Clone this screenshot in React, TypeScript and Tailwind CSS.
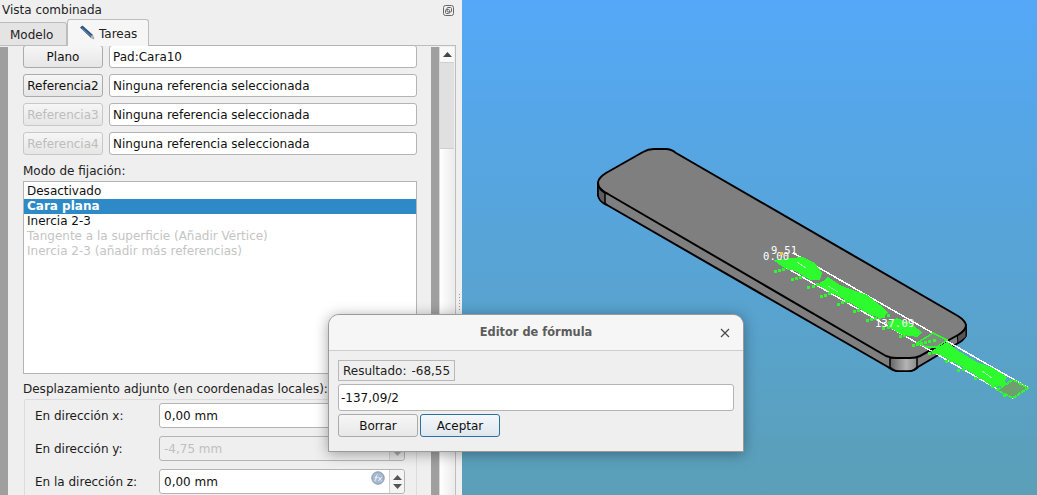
import React from 'react';

const FONT = "font-['DejaVu_Sans',sans-serif]";

const RefRow = ({ label, value, disabled }: { label: string; value: string; disabled?: boolean }) => (
  <div className="flex gap-[6px] h-[23px]">
    <div
      className={`w-[80px] h-full flex items-center justify-center rounded-[3px] border bg-gradient-to-b from-[#f6f6f6] to-[#e6e6e6] ${
        disabled ? 'border-[#c8c8c8] text-[#bdbdbd]' : 'border-[#ababab] text-[#111]'
      }`}
    >
      {label}
    </div>
    <div className="w-[308px] h-full flex items-center pl-[3px] bg-white border border-[#b4b4b4] rounded-[3px] text-[#111]">
      {value}
    </div>
  </div>
);

const SpinArrows = ({ disabled }: { disabled?: boolean }) => (
  <div className={`w-[15px] h-full flex flex-col items-center justify-center gap-[4px] border-l border-[#cfcfcf] rounded-r-[3px] ${disabled ? 'bg-[#e6e6e6]' : 'bg-[#f4f4f4]'}`}>
    <svg width="9" height="5" viewBox="0 0 9 5"><path d="M4.5 0 9 5H0z" fill={disabled ? '#a8a8a8' : '#555'} /></svg>
    <svg width="9" height="5" viewBox="0 0 9 5"><path d="M0 0h9L4.5 5z" fill={disabled ? '#a8a8a8' : '#555'} /></svg>
  </div>
);

const ExprIcon = () => (
  <svg width="14" height="14" viewBox="0 0 14 14" className="absolute right-[19px] top-[1px]">
    <circle cx="7" cy="7" r="6.2" fill="#a9bad0" stroke="#8094b0" />
    <path d="M3.5 10C5.5 10 4.5 4 6.5 3.8M3.8 6.4h3M7.4 6c1.4 1 1.6 3 3.2 4M10.8 6c-1.4 1-1.8 3-3.4 4" fill="none" stroke="#eef2f7" strokeWidth="1" />
  </svg>
);

const OffsetRow = ({ label, value, disabled }: { label: string; value: string; disabled?: boolean }) => (
  <div className="flex items-center h-[25px]">
    <div className="w-[124px] text-[#1a1a1a]">{label}</div>
    <div className={`relative w-[246px] h-full flex items-center border border-[#b4b4b4] rounded-[3px] ${disabled ? 'bg-[#efefef] text-[#c0c0c0]' : 'bg-white text-[#111]'}`}>
      <div className="flex-1 pl-[4px]">{value}</div>
      {!disabled && <ExprIcon />}
      <SpinArrows disabled={disabled} />
    </div>
  </div>
);

const Blob = ({ d }: { d: string }) => <path d={d} fill="#2dfb2d" />;

// rough specks so the imported sketch keeps its jagged edge
const specks = Array.from({ length: 90 }, (_, i) => {
  const t = i / 89;
  const across = ((i * 37) % 17) - 8;
  return { x: 778 + 240 * t + across * 0.5, y: 263 + 130 * t - across * 0.85 };
});

const PlateView = () => (
  <svg viewBox="462 0 575 495" className="w-full h-full block">
    <defs>
      <linearGradient id="cornerFill" x1="0" x2="1" y1="0" y2="0">
        <stop offset="0" stopColor="#666" />
        <stop offset="0.6" stopColor="#b4b4b4" />
        <stop offset="1" stopColor="#8a8a8a" />
      </linearGradient>
    </defs>
    {/* plate side */}
    <path
      d="M598 183V195Q599 201 607 205L888 367Q893 371 898 371H909Q914 371 918 367L960 342Q966 338 966 333V325L598 183Z"
      fill="#7f7f7f"
      stroke="#000"
      strokeWidth="2"
      strokeLinejoin="round"
    />
    <path d="M598 184V195Q599 201 605 204V193Q599 190 598 184Z" fill="#5e5e5e" stroke="#000" strokeWidth="1.5" />
    <path d="M890 358V367Q894 371 898 371H909Q914 371 917 367V357Z" fill="url(#cornerFill)" stroke="#000" strokeWidth="1.5" />
    <path d="M957 333L958 343L966 337V325Z" fill="#555" stroke="#000" strokeWidth="1" />
    {/* plate top */}
    <path
      d="M598 183Q598 178 606 173L643 152Q648 149 654 149H666Q671 149 676 153L958 316Q966 321 966 326Q965 331 958 335L920 356Q916 358 910 358H896Q891 358 886 356L608 194Q598 189 598 183Z"
      fill="#7f7f7f"
      stroke="#000"
      strokeWidth="2"
      strokeLinejoin="round"
    />
    <g shapeRendering="crispEdges">
      {/* sketch outline */}
      <path d="M793 253L1027 387L1013 398L778 263" fill="none" stroke="#fff" strokeWidth="1.5" />
      {/* sketch fill */}
      <Blob d="M773 260L790 258L803 257L815 263L822 273L820 280L810 280L797 272L783 267Z" />
      <Blob d="M818 285L828 277L840 285L853 290L867 295L880 305L888 312L883 318L870 315L857 307L840 297L830 292Z" />
      <Blob d="M887 322L897 318L910 323L922 332L917 337L903 335L890 328Z" />
      <path d="M917 343L933 333L947 340L937 347L927 347Z" fill="#7f8f7f" stroke="#2dfb2d" strokeWidth="1.5" />
      <Blob d="M930 352L947 342L960 352L977 362L993 368L1007 377L1003 385L993 387L980 378L967 370L953 362L940 355Z" />
      {specks.map((s, i) => (
        <rect key={i} x={Math.round(s.x)} y={Math.round(s.y)} width="3" height="3" fill="#2dfb2d" />
      ))}
      <path d="M997 390L1013 380L1028 388L1013 398L1003 393Z" fill="#6f9f6f" stroke="#2dfb2d" strokeWidth="2" strokeDasharray="4 1" />
      <path d="M797 262L806 268M828 286L838 292M982 371L992 378" stroke="#9dfc9d" strokeWidth="1" />
    </g>
    {/* dimension labels */}
    <text x="771" y="254" fontFamily="'DejaVu Sans Mono', monospace" fontSize="10.5" letterSpacing="0.3" fill="#fff">9.51</text>
    <text x="763" y="260" fontFamily="'DejaVu Sans Mono', monospace" fontSize="10.5" letterSpacing="0.3" fill="#fff">0.00</text>
    <text x="875" y="327" fontFamily="'DejaVu Sans Mono', monospace" fontSize="10.5" letterSpacing="0.3" fill="#fff">137.09</text>
    <rect x="780" y="252" width="3" height="3" fill="#f7c52c" />
  </svg>
);

const FormulaDialog = () => (
  <div className="absolute left-[328px] top-[314px] w-[416px] h-[138px] rounded-t-[11px] bg-[#efefef] border border-[#9a9a9a] shadow-[0_2px_14px_rgba(0,0,0,0.35)] overflow-hidden">
    <div className="relative h-[36px] flex items-center justify-center bg-[#f6f6f6] border-b border-[#cdcdcd] font-bold text-[11.4px] text-[#5c5c5c]">
      Editor de fórmula
      <svg width="10" height="10" viewBox="0 0 10 10" className="absolute right-[13px] top-[13px]">
        <path d="M1 1l8 8M9 1l-8 8" stroke="#4a4a4a" strokeWidth="1.2" />
      </svg>
    </div>
    <div className="flex flex-col items-start px-[9px] pt-[9px]">
      <div className="h-[21px] w-[117px] flex items-center pl-[4px] gap-[5px] border border-[#b8b8b8] text-[#222]">
        <span>Resultado:</span>
        <span>-68,55</span>
      </div>
      <div className="mt-[3px] w-[396px] h-[27px] flex items-center pl-[2px] bg-white border border-[#b4b4b4] rounded-[3px] text-[#111]">
        -137,09/2
      </div>
      <div className="mt-[3px] flex gap-[2px]">
        <div className="w-[80px] h-[23px] pt-[1px] flex items-center justify-center rounded-[3px] border border-[#ababab] bg-gradient-to-b from-[#f6f6f6] to-[#e8e8e8] text-[#111]">
          Borrar
        </div>
        <div className="w-[80px] h-[23px] pt-[1px] flex items-center justify-center rounded-[3px] border border-[#2f6f9f] bg-gradient-to-b from-[#f4f7fa] to-[#dfe7ee] text-[#111]">
          Aceptar
        </div>
      </div>
    </div>
  </div>
);

export default function App() {
  return (
    <div className={`relative flex w-[1037px] h-[495px] overflow-hidden text-[12px] ${FONT}`}>
      {/* Combo view */}
      <div className="w-[462px] h-full flex flex-col shrink-0 bg-[#efefef]">
        <div className="h-[19px] pt-[1px] flex items-center justify-between pl-[2px] pr-[8px] text-[#222]">
          <span>Vista combinada</span>
          <svg width="11" height="11" viewBox="0 0 11 11" fill="none" stroke="#666">
            <rect x="0.5" y="0.5" width="10" height="10" rx="2" />
            <rect x="4" y="2.5" width="4.5" height="4.5" rx="1" />
            <rect x="2.5" y="4.5" width="4" height="4" rx="1" />
          </svg>
        </div>
        <div className="h-[27px] flex items-end relative z-10 -mb-[1px]">
          <div className="w-[67px] h-[24px] pl-[10px] pt-[1px] flex items-center bg-[#e4e4e4] border border-[#bdbdbd] border-l-0 rounded-tr-[3px] text-[#222]">
            Modelo
          </div>
          <div className="w-[82px] h-[27px] pt-[1px] flex items-center gap-[4px] pl-[11px] bg-[#f6f6f6] border border-[#bdbdbd] border-b-0 rounded-t-[3px] text-[#222]">
            <svg width="16" height="15" viewBox="0 0 16 15" className="-mt-[2px]">
              <path d="M1 2.5L3.5 0.5L13.5 9.5L11.5 12.5Z" fill="#2f5583" />
              <path d="M3 3.5L12 11" stroke="#6d8db0" strokeWidth="1" />
              <path d="M11.5 12.5L15 14L13.5 9.5Z" fill="#c4c4c4" stroke="#777" strokeWidth="0.5" />
            </svg>
            <span>Tareas</span>
          </div>
        </div>
        <div className="flex-1 min-h-0 w-[456px] flex border-t border-r border-[#bdbdbd]">
          <div className="w-[8px] bg-[#9f9f9f] mt-[1px]" />
          <div className="w-[423px] flex flex-col pl-[15px] -mt-[1px] overflow-hidden">
            <div className="flex flex-col gap-[6px]">
              <RefRow label="Plano" value="Pad:Cara10" />
              <RefRow label="Referencia2" value="Ninguna referencia seleccionada" />
              <RefRow label="Referencia3" value="Ninguna referencia seleccionada" disabled />
              <RefRow label="Referencia4" value="Ninguna referencia seleccionada" disabled />
            </div>
            <div className="mt-[7px] h-[21px] flex items-center text-[#222]">Modo de fijación:</div>
            <div className="mt-[1px] w-[394px] h-[193px] shrink-0 bg-white border border-[#b4b4b4] pt-[2px] leading-[15px]">
              <div className="h-[15px] pl-[3px] text-[#111]">Desactivado</div>
              <div className="h-[15px] pl-[3px] bg-[#2e8ac6] text-white font-bold">Cara plana</div>
              <div className="h-[15px] pl-[3px] text-[#111]">Inercia 2-3</div>
              <div className="h-[15px] pl-[3px] text-[#c4c4c4]">Tangente a la superficie (Añadir Vértice)</div>
              <div className="h-[15px] pl-[3px] text-[#c4c4c4]">Inercia 2-3 (añadir más referencias)</div>
            </div>
            <div className="mt-[7px] h-[16px] flex items-center text-[#222] whitespace-nowrap">
              Desplazamiento adjunto (en coordenadas locales):
            </div>
            <div className="mt-[2px] ml-[1px] w-[393px] flex flex-col gap-[8px] pt-[3px] pl-[10px] border border-[#dcdcdc] rounded-[2px] h-[120px] shrink-0">
              <OffsetRow label="En dirección x:" value="0,00 mm" />
              <OffsetRow label="En dirección y:" value="-4,75 mm" disabled />
              <OffsetRow label="En la dirección z:" value="0,00 mm" />
            </div>
          </div>
          <div className="w-[8px] bg-[#9f9f9f] mt-[1px]" />
          <div className="flex-1 flex flex-col mt-[1px] mr-[1px] bg-gradient-to-r from-[#ffffff] to-[#ececec] border-l border-[#d8d8d8]">
            <div className="h-[15px] flex items-center justify-center bg-[#f8f8f8]">
              <svg width="9" height="5" viewBox="0 0 9 5"><path d="M4.5 0 9 5H0z" fill="#444" /></svg>
            </div>
            <div className="h-[87px] bg-[#e0e0e0] border-y border-[#cfcfcf]" />
          </div>
        </div>
      </div>
      {/* splitter handle */}
      <div className="absolute left-[459px] top-[294px] flex flex-col gap-[2px]">
        <div className="w-[1px] h-[1px] bg-[#9a9a9a]" />
        <div className="w-[1px] h-[1px] bg-[#9a9a9a]" />
        <div className="w-[1px] h-[1px] bg-[#9a9a9a]" />
        <div className="w-[1px] h-[1px] bg-[#9a9a9a]" />
        <div className="w-[1px] h-[1px] bg-[#9a9a9a]" />
        <div className="w-[1px] h-[1px] bg-[#9a9a9a]" />
      </div>
      {/* 3D view */}
      <div className="flex-1 h-full bg-gradient-to-b from-[#54a8f7] to-[#5b9fb7]">
        <PlateView />
      </div>
      <FormulaDialog />
    </div>
  );
}
